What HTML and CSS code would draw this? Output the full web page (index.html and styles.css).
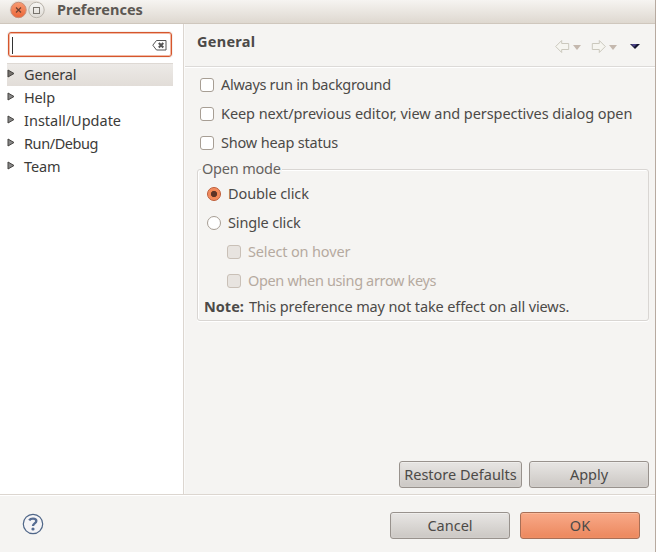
FILE: index.html
```
<!DOCTYPE html>
<html lang="en">
<head>
<meta charset="utf-8">
<title>Preferences</title>
<link rel="stylesheet" href="styles.css">
</head>
<body>
<div class="window">
  <header class="titlebar">
    <div class="window-controls">
      <svg width="36" height="20" viewBox="0 0 36 20">
        <defs>
          <linearGradient id="close" x2="0" y2="1"><stop stop-color="#f99b72"/><stop offset="1" stop-color="#eb6538"/></linearGradient>
          <linearGradient id="max" x2="0" y2="1"><stop stop-color="#f8f7f5"/><stop offset="1" stop-color="#dedad4"/></linearGradient>
        </defs>
        <rect x="0.5" y="0.5" width="35" height="19" rx="9.5" fill="#e6e0d9"/>
        <circle cx="9.5" cy="10" r="7.7" fill="url(#close)" stroke="#c98e78"/>
        <path d="M7 7.5l5 5M12 7.5l-5 5" stroke="#6d4030" stroke-width="1.2"/>
        <circle cx="27.5" cy="10" r="7.7" fill="url(#max)" stroke="#b9b4ac"/>
        <rect x="24.5" y="7.5" width="6" height="6" fill="none" stroke="#77736d"/>
      </svg>
    </div>
    <h1 class="window-title"><span>Preferences</span></h1>
  </header>
  <div class="main">
    <nav class="sidebar">
      <div class="filter">
        <span class="caret"></span>
        <svg width="15" height="11" viewBox="0 0 15 11"><path d="M4.5.5h9.500v9.500H4.500L.8 5.200z" fill="#fff" stroke="#555" /><path d="M6.800 3l4.500 4.500M11.300 3l-4.500 4.500" stroke="#555" stroke-width="2"/></svg>
      </div>
      <ul class="tree">
        <li class="selected"><svg width="8" height="9" viewBox="0 0 8 9"><path d="M1 1v7l6-3.5z" fill="#77736e" stroke="#454340"/></svg><span class="t-general">General</span></li>
        <li><svg width="8" height="9" viewBox="0 0 8 9"><path d="M1 1v7l6-3.5z" fill="#888" stroke="#454340"/></svg><span class="t-help">Help</span></li>
        <li><svg width="8" height="9" viewBox="0 0 8 9"><path d="M1 1v7l6-3.5z" fill="#888" stroke="#454340"/></svg><span class="t-install">Install/Update</span></li>
        <li><svg width="8" height="9" viewBox="0 0 8 9"><path d="M1 1v7l6-3.5z" fill="#888" stroke="#454340"/></svg><span class="t-run">Run/Debug</span></li>
        <li><svg width="8" height="9" viewBox="0 0 8 9"><path d="M1 1v7l6-3.5z" fill="#888" stroke="#454340"/></svg><span class="t-team">Team</span></li>
      </ul>
    </nav>
    <main class="page">
      <div class="page-head">
        <h2>General</h2>
        <svg class="nav-icons" width="86" height="14" viewBox="0 0 86 14">
          <path d="M.7 6.500l6-6v3h7v6h-7v3z" fill="#f6f5f0" stroke="#cbc8bd"/>
          <path d="M18 5h8l-4 5z" fill="#c4b8ae"/>
          <path d="M50.300 6.500l-6-6v3h-7v6h7v3z" fill="#f6f5f0" stroke="#cbc8bd"/>
          <path d="M54 5h8l-4 5z" fill="#c4b8ae"/>
          <path d="M75 4h10l-5 5z" fill="#15152e"/><path d="M76 4h6l-3 3z" fill="#4a4288"/>
        </svg>
      </div>
      <div class="page-body">
        <label class="option"><i class="check"></i><span class="o-always">Always run in background</span></label>
        <label class="option"><i class="check"></i><span class="o-keep">Keep next/previous editor, view and perspectives dialog open</span></label>
        <label class="option"><i class="check"></i><span class="o-heap">Show heap status</span></label>
        <section class="group">
          <h3><span class="g-title">Open mode</span></h3>
          <label class="option"><i class="radio on"></i><span class="o-double">Double click</span></label>
          <label class="option"><i class="radio"></i><span class="o-single">Single click</span></label>
          <label class="option disabled"><i class="check"></i><span class="o-hover">Select on hover</span></label>
          <label class="option disabled"><i class="check"></i><span class="o-arrow">Open when using arrow keys</span></label>
          <p class="note"><b>Note:</b><span>This preference may not take effect on all views.</span></p>
        </section>
        <div class="page-actions">
          <button class="restore"><span>Restore Defaults</span></button>
          <button class="apply"><span>Apply</span></button>
        </div>
      </div>
    </main>
  </div>
  <footer class="footer">
    <svg width="22" height="22" viewBox="0 0 22 22"><circle cx="11" cy="11" r="9.700" fill="#f5f4f6" stroke="#4f6688" stroke-width="1.200"/><path d="M7.200 7.400Q8.300 5.600 11 5.600Q14.300 5.600 14.300 8C14.300 10.500 11 10.300 11 13" fill="none" stroke="#566c92" stroke-width="2.400"/><circle cx="11" cy="16" r="1.600" fill="#566c92"/></svg>
    <div class="footer-actions">
      <button class="cancel"><span>Cancel</span></button>
      <button class="ok"><span>OK</span></button>
    </div>
  </footer>
</div>
</body>
</html>
```
FILE: styles.css
```
* { box-sizing: border-box; }
body {
  margin: 0;
  font: 14.5px/20px "Noto Sans", "Open Sans", sans-serif;
  color: #4c4a48;
  background: #f5f4f2;
}
h1, h2, h3, p, ul { margin: 0; padding: 0; font-size: inherit; }
svg { display: block; flex: none; }
span, h2, b { white-space: nowrap; }
.window {
  width: 656px;
  height: 552px;
  display: flex;
  flex-direction: column;
  border-right: 1px solid #b7aaa0;
  background: #f5f4f2;
}
.titlebar {
  height: 24px;
  display: flex;
  padding-left: 9px;
  background: linear-gradient(#f6f4f1, #ded8d0);
  border-bottom: 1px solid #cfc7bd;
}
.window-title { margin: -1px 0 0 12px; color: #5c5853; }
.main { height: 470px; display: flex; }
.sidebar {
  width: 184px;
  background: #fff;
  border-right: 1px solid #dcd6d0;
  padding: 8px 10px 0 7px;
}
.filter {
  width: 164px;
  height: 25px;
  margin-left: 1px;
  display: flex;
  align-items: center;
  justify-content: space-between;
  padding: 1px 4px 0 3px;
  border: 1px solid #d5562d;
  border-radius: 3px;
  box-shadow: inset 0 0 0 1px #f3b9a4, 0 0 0 1px #f3f1ef;
}
.caret { width: 1px; height: 17px; background: #333; }
.tree { list-style: none; margin-top: 6px; color: #3c3b39; }
.tree li { display: flex; height: 23px; gap: 9px; padding-top: 1px; }
.tree li svg { margin-top: 5px; }
.tree .selected { background: linear-gradient(#edeae7, #e2ddd8); border-top: 1px solid #ded9d4; padding-top: 0; }
.t-general, .t-help, .t-team { letter-spacing: -.15px; }
.t-run { letter-spacing: -.42px; }
.page { flex: 1; display: flex; flex-direction: column; border-left: 1px solid #fafaf9; }
.page-head {
  height: 43px;
  display: flex;
  justify-content: space-between;
  padding: 7px 14px 0 12px;
  border-bottom: 1px solid #dcdad8;
  box-shadow: 0 1px #fff;
}
.page-head h2 { letter-spacing: .28px; }
.nav-icons { margin-top: 9px; }
.page-body { flex: 1; display: flex; flex-direction: column; padding: 3px 6px 6px 12px; }
.option { height: 29px; display: flex; align-items: center; gap: 7px; padding-left: 3px; }
.option span { margin-top: -2px; }
.o-always { letter-spacing: -.29px; }
.o-keep { letter-spacing: -.07px; }
.o-heap { letter-spacing: -.18px; }
.o-double { letter-spacing: -.1px; }
.o-single, .o-hover { letter-spacing: -.15px; }
.o-arrow { letter-spacing: -.35px; }
.check, .radio {
  width: 14px;
  height: 14px;
  flex: none;
  border: 1px solid #a79e94;
  border-radius: 3px;
  background: #fff;
}
.radio { border-radius: 50%; }
.radio.on {
  border-color: #bd5932;
  background: radial-gradient(circle, #5e3426 0 2.8px, #f3844f 3.4px, #f49168 6px);
}
.group {
  height: 152px;
  margin-top: 12px;
  border: 1px solid #d9d6d3;
  border-radius: 3px;
  box-shadow: inset 1px 1px #fff, 0 1px #fff;
}
.group h3 { height: 10px; margin-top: -12px; padding-left: 3px; font-weight: 400; color: #65625e; }
.group h3 span { display: inline-block; padding: 0 1px; background: #f5f4f2; letter-spacing: -.2px; }
.group .option { padding-left: 9px; }
.group h3 + .option { margin-top: 11px; }
.group .disabled { padding-left: 29px; color: #b5aaa0; }
.disabled .check { border-color: #c9c0b7; background: #e8e4e0; }
.note { display: flex; gap: 5px; padding-left: 6px; margin-top: 1px; }
.note span { letter-spacing: -.12px; }
.page-actions { margin-top: auto; display: flex; justify-content: flex-end; gap: 7px; }
button {
  width: 120px;
  height: 27px;
  padding: 0 0 2px;
  font: inherit;
  color: #4c4a48;
  border: 1px solid #98928d;
  border-radius: 3px;
  background: linear-gradient(#e8e6e4, #cbc7c3);
  box-shadow: inset 0 1px #efeeec, inset 0 0 3px #dad6d3;
}
.restore { width: 123px; }
.ok {
  border-color: #a76f57;
  background: linear-gradient(#f8aa89, #ec875d);
  box-shadow: inset 0 1px #fbb999, inset 0 0 3px #f49a72;
}
.footer {
  flex: 1;
  display: flex;
  justify-content: space-between;
  padding: 17px 15px 0 22px;
  border-top: 1px solid #dcd6d0;
  box-shadow: inset 0 1px #fff;
}
.footer > svg { margin-top: 1px; }
.footer-actions { display: flex; gap: 10px; }
```
